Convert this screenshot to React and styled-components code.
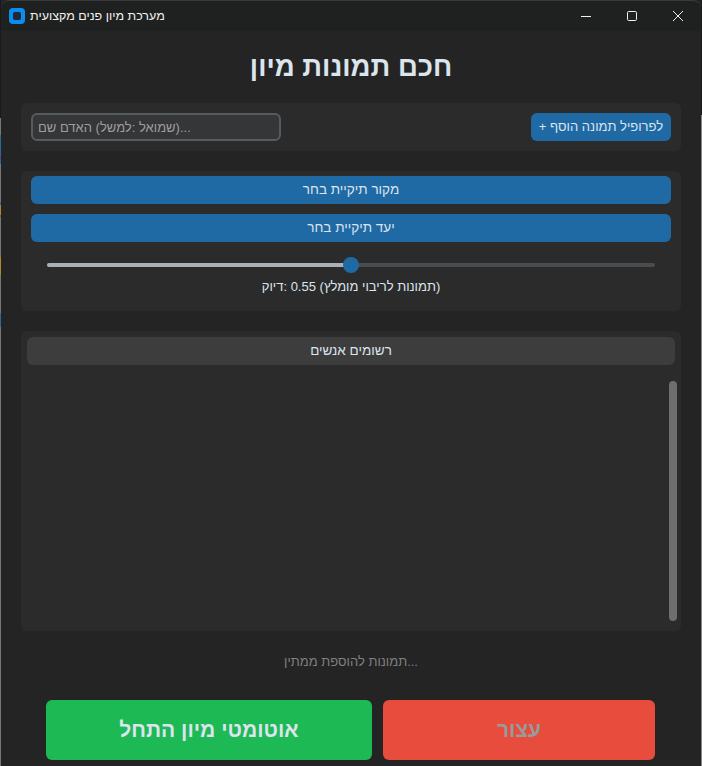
import styled, { createGlobalStyle } from "styled-components";

const GlobalStyle = createGlobalStyle`
  html, body {
    margin: 0;
    padding: 0;
    background: #161616;
  }
  * {
    box-sizing: border-box;
  }
`;

const fontStack = `"Liberation Sans", "DejaVu Sans", sans-serif`;

const Desktop = styled.div`
  width: 702px;
  height: 766px;
  display: flex;
  overflow: hidden;
`;

// the desktop behind the window shows through as a 1px line on both sides
const LeftEdge = styled.div`
  width: 1px;
  flex: none;
  background: linear-gradient(
    to bottom,
    #1a1a1a 0 118px,
    #777 118px 135px,
    #2a6a9a 135px 156px,
    #6a3a8a 156px 159px,
    #2a6a9a 159px 164px,
    #777 164px 202px,
    #2a6a9a 202px 205px,
    #b08a2a 205px 215px,
    #a04040 215px 217px,
    #777 217px 257px,
    #b08a2a 257px 275px,
    #777 275px 313px,
    #2a6a9a 313px 327px,
    #777 327px
  );
`;

const RightEdge = styled.div`
  width: 1px;
  flex: none;
  background: linear-gradient(to bottom, #1a1a1a 0 115px, #8a8a8a 115px);
`;

const Window = styled.div`
  flex: 1;
  display: flex;
  flex-direction: column;
  background: #242424;
  color: #dce4ee;
  font-family: ${fontStack};
  direction: ltr;
`;

const TitleBar = styled.div`
  height: 31px;
  flex: none;
  display: flex;
  align-items: center;
  padding-left: 8px;
  background: #1f2020;
  border-top: 1px solid #3a3a3a;
  border-radius: 8px 8px 0 0;
`;

const WindowTitle = styled.span`
  margin-left: 5px;
  font-size: 12.5px;
  color: #f2f2f2;
  direction: rtl;
`;

const WindowControls = styled.div`
  margin-left: auto;
  display: flex;
`;

const ControlButton = styled.div`
  width: 46px;
  height: 30px;
  display: flex;
  align-items: center;
  justify-content: center;
`;

const Content = styled.main`
  flex: 1;
  display: flex;
  flex-direction: column;
  padding: 0 20px;
`;

const Heading = styled.h1`
  height: 72px;
  margin: 0;
  display: flex;
  align-items: center;
  justify-content: center;
  font-size: 27.5px;
  font-weight: 700;
`;

const Card = styled.section`
  background: #2b2b2b;
  border-radius: 6px;
`;

const AddRow = styled(Card)`
  height: 48px;
  display: flex;
  align-items: center;
  justify-content: space-between;
  padding: 0 10px;
`;

const NameInput = styled.input`
  width: 250px;
  height: 28px;
  padding: 0 5px;
  background: #343638;
  border: 2px solid #565b5e;
  border-radius: 6px;
  outline: none;
  font-family: ${fontStack};
  font-size: 13px;
  color: #dce4ee;

  &::placeholder {
    color: #9e9e9e;
    opacity: 1;
  }
`;

const BlueButton = styled.button`
  height: 28px;
  width: ${(props) => props.$width || "100%"};
  padding: 0 0 2px;
  border: none;
  border-radius: 6px;
  background: #1f6aa5;
  color: #dce4ee;
  font-family: ${fontStack};
  font-size: ${(props) => props.$size || "13.5px"};
`;

const FoldersCard = styled(Card)`
  height: 140px;
  margin-top: 20px;
  display: flex;
  flex-direction: column;
  gap: 10px;
  padding: 5px 10px 0;
`;

const SliderBlock = styled.div`
  display: flex;
  flex-direction: column;
  align-items: center;
  padding: 11px 16px 0;
`;

const SliderTrack = styled.div`
  position: relative;
  width: 100%;
  height: 4px;
  border-radius: 2px;
  background: #4a4d50;
`;

const SliderFill = styled.div`
  height: 100%;
  border-radius: 2px;
  background: #aab0b5;
`;

const SliderThumb = styled.div`
  position: absolute;
  top: 50%;
  width: 16px;
  height: 16px;
  border-radius: 50%;
  background: #1f6aa5;
  transform: translate(-50%, -50%);
`;

const AccuracyLabel = styled.div`
  margin-top: 12px;
  font-size: 13px;
  line-height: 16px;
`;

const PeopleCard = styled(Card)`
  height: 300px;
  margin-top: 20px;
  display: flex;
  flex-direction: column;
`;

const PeopleHeader = styled.div`
  height: 28px;
  flex: none;
  margin: 6px 6px 0;
  padding-bottom: 2px;
  display: flex;
  align-items: center;
  justify-content: center;
  border-radius: 6px;
  background: #3d3d3d;
  font-size: 13.5px;
`;

const PeopleList = styled.div`
  flex: 1;
  display: flex;
  justify-content: flex-end;
  padding: 16px 4px 10px 0;
`;

const ScrollThumb = styled.div`
  width: 8px;
  height: 100%;
  border-radius: 4px;
  background: #6e6e6e;
`;

const Status = styled.div`
  height: 69px;
  flex: none;
  padding-bottom: 9px;
  display: flex;
  align-items: center;
  justify-content: center;
  font-size: 13px;
  color: #808080;
`;

const Actions = styled.div`
  display: flex;
  gap: 11px;
  padding: 0 26px 0 25px;
`;

const ActionButton = styled.button`
  flex: ${(props) => props.$grow};
  height: 60px;
  padding: 0;
  border: none;
  border-radius: 6px;
  background: ${(props) => props.$color};
  color: #dce4ee;
  font-family: ${fontStack};
  font-size: 21px;
  font-weight: 700;

  &:disabled {
    color: #9a9a9a;
  }
`;

// the app draws Hebrew words in left to right order, so keep the spaces LTR
const ltrWords = (text) => text.split(" ").join("\u200E \u200E");

const SLIDER_VALUE = 0.5;

export default function App() {
  return (
    <>
      <GlobalStyle />
      <Desktop>
        <LeftEdge />
        <Window>
          <TitleBar>
            <svg width="16" height="16" viewBox="0 0 16 16">
              <rect width="16" height="16" rx="4" fill="#0a8cf0" />
              <rect x="4" y="4" width="8" height="8" rx="2" fill="#1f2937" />
            </svg>
            <WindowTitle>מערכת מיון פנים מקצועית</WindowTitle>
            <WindowControls>
              <ControlButton>
                <svg width="10" height="10" viewBox="0 0 10 10">
                  <path d="M0 5.5h10" stroke="#f0f0f0" fill="none" />
                </svg>
              </ControlButton>
              <ControlButton>
                <svg width="10" height="10" viewBox="0 0 10 10">
                  <rect x="0.5" y="0.5" width="9" height="9" rx="1.2" stroke="#f0f0f0" fill="none" />
                </svg>
              </ControlButton>
              <ControlButton>
                <svg width="10" height="10" viewBox="0 0 10 10">
                  <path d="M0 0l10 10M10 0L0 10" stroke="#f0f0f0" fill="none" />
                </svg>
              </ControlButton>
            </WindowControls>
          </TitleBar>
          <Content>
            <Heading>{ltrWords("מיון תמונות חכם")}</Heading>
            <AddRow>
              <NameInput placeholder={ltrWords("שם האדם (למשל: שמואל)...")} />
              <BlueButton $width="140px" $size="13px">{ltrWords("+ הוסף תמונה לפרופיל")}</BlueButton>
            </AddRow>
            <FoldersCard>
              <BlueButton>{ltrWords("בחר תיקיית מקור")}</BlueButton>
              <BlueButton>{ltrWords("בחר תיקיית יעד")}</BlueButton>
              <SliderBlock>
                <SliderTrack>
                  <SliderFill style={{ width: `${SLIDER_VALUE * 100}%` }} />
                  <SliderThumb style={{ left: `${SLIDER_VALUE * 100}%` }} />
                </SliderTrack>
                <AccuracyLabel>{ltrWords("דיוק: 0.55 (מומלץ לריבוי תמונות)")}</AccuracyLabel>
              </SliderBlock>
            </FoldersCard>
            <PeopleCard>
              <PeopleHeader>{ltrWords("אנשים רשומים")}</PeopleHeader>
              <PeopleList>
                <ScrollThumb />
              </PeopleList>
            </PeopleCard>
            <Status>{ltrWords("ממתין להוספת תמונות...")}</Status>
            <Actions>
              <ActionButton $grow="326" $color="#1db954">{ltrWords("התחל מיון אוטומטי")}</ActionButton>
              <ActionButton $grow="272" $color="#e74c3c" disabled>עצור</ActionButton>
            </Actions>
          </Content>
        </Window>
        <RightEdge />
      </Desktop>
    </>
  );
}
